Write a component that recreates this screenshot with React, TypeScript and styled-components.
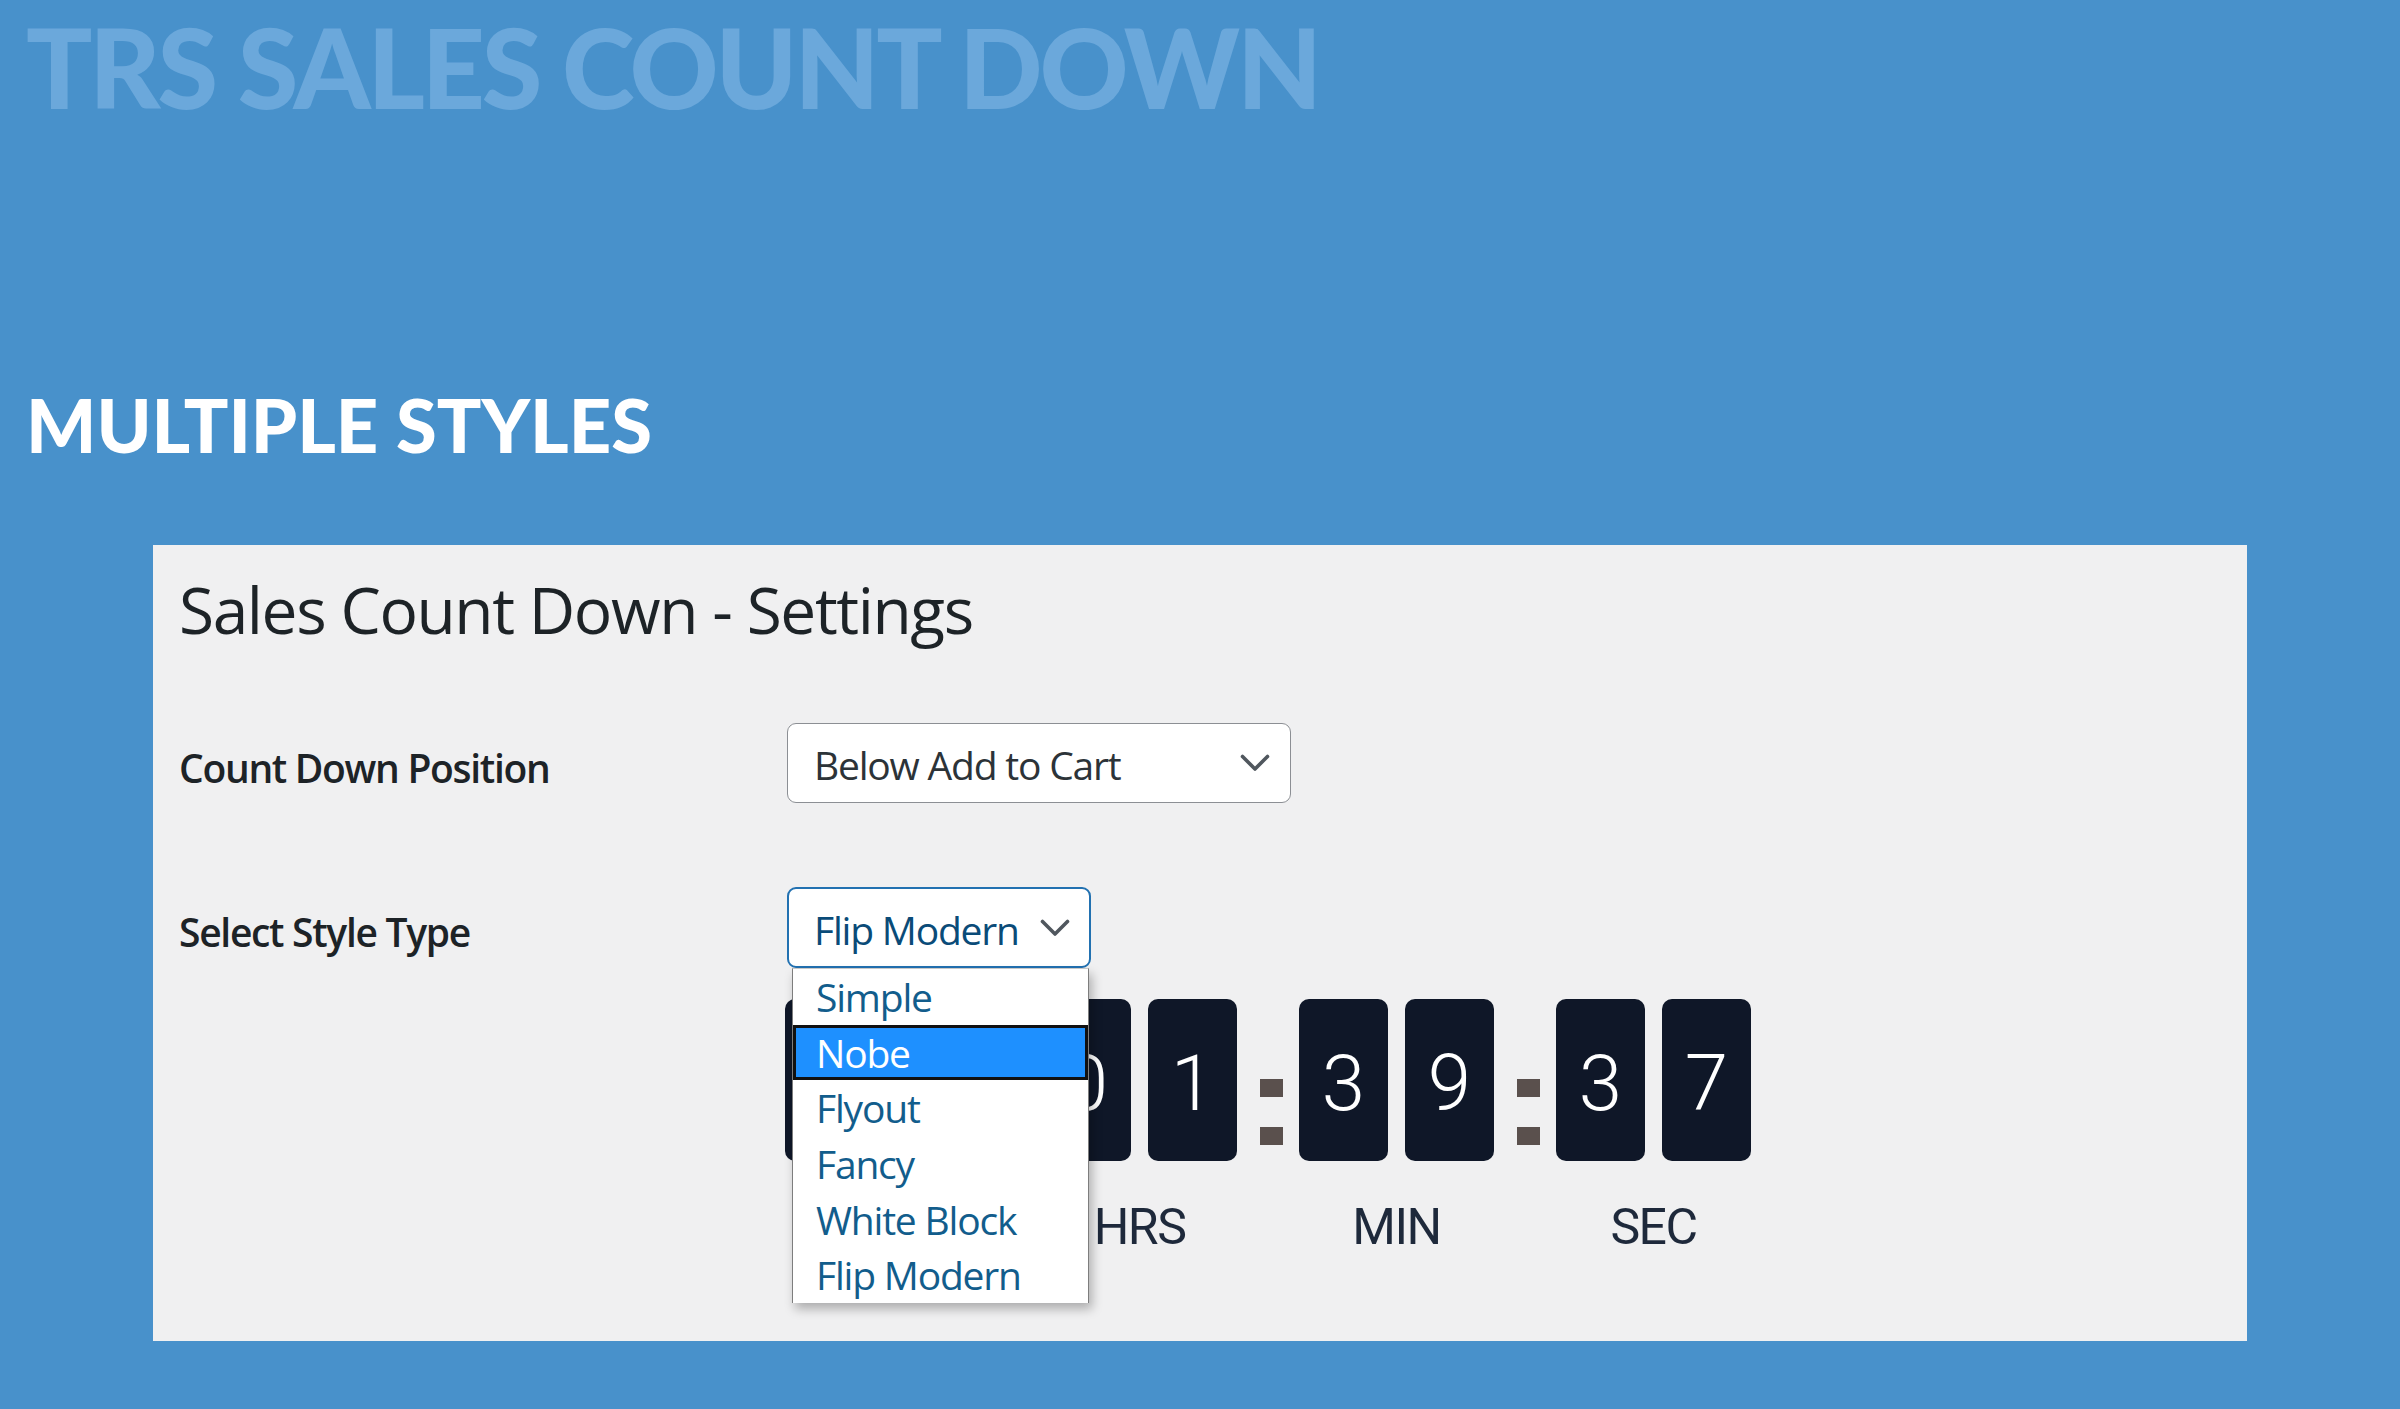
import React from "react";
import styled, { createGlobalStyle } from "styled-components";

const GlobalStyle = createGlobalStyle`
  html, body {
    margin: 0;
    padding: 0;
    background: #4891cb;
  }
  * {
    box-sizing: border-box;
  }
`;

const styleOptions = ["Simple", "Nobe", "Flyout", "Fancy", "White Block", "Flip Modern"];

const countdown = [
  { label: "DAYS", digits: ["0", "0"] },
  { label: "HRS", digits: ["0", "1"] },
  { label: "MIN", digits: ["3", "9"] },
  { label: "SEC", digits: ["3", "7"] },
];

const Chevron = () => (
  <svg width="30" height="18" viewBox="0 0 30 18" fill="none">
    <polyline
      points="2.5,2.5 15,15 27.5,2.5"
      stroke="#50575e"
      strokeWidth="3.6"
      strokeLinecap="round"
      strokeLinejoin="round"
    />
  </svg>
);

export default function App() {
  return (
    <>
      <GlobalStyle />
      <Page>
        <BigTitle>TRS SALES COUNT DOWN</BigTitle>
        <SubTitle>MULTIPLE STYLES</SubTitle>
        <Panel>
          <PanelTitle>Sales Count Down - Settings</PanelTitle>
          <Form>
            <FormRow $spacing={75}>
              <FieldLabel>Count Down Position</FieldLabel>
              <SelectBox $width={504}>
                <SelectText>Below Add to Cart</SelectText>
                <Chevron />
              </SelectBox>
            </FormRow>
            <FormRow $spacing={84}>
              <FieldLabel>Select Style Type</FieldLabel>
              <SelectBox $width={304} $focused>
                <SelectText $focused>Flip Modern</SelectText>
                <Chevron />
                <OptionList>
                  {styleOptions.map((opt) => (
                    <OptionItem key={opt} $active={opt === "Nobe"}>
                      {opt}
                    </OptionItem>
                  ))}
                </OptionList>
              </SelectBox>
            </FormRow>
            <FormRow $spacing={31}>
              <div />
              <Countdown>
                {countdown.map((group, i) => (
                  <React.Fragment key={group.label}>
                    {i > 0 && (
                      <Colon>
                        <ColonDot />
                        <ColonDot />
                      </Colon>
                    )}
                    <TimeGroup>
                      <DigitRow>
                        {group.digits.map((d, j) => (
                          <DigitCard key={j}>{d}</DigitCard>
                        ))}
                      </DigitRow>
                      <TimeLabel>{group.label}</TimeLabel>
                    </TimeGroup>
                  </React.Fragment>
                ))}
              </Countdown>
            </FormRow>
          </Form>
        </Panel>
      </Page>
    </>
  );
}

const Page = styled.div`
  width: 2400px;
  height: 1409px;
  overflow: hidden;
  background: #4891cb;
  padding: 11px 0 0 26px;
  display: flex;
  flex-direction: column;
  align-items: flex-start;
`;

const BigTitle = styled.h1`
  margin: 0;
  font-family: Lato, "Open Sans", sans-serif;
  font-weight: 900;
  font-size: 110px;
  line-height: 110px;
  letter-spacing: -3.2px;
  color: #6ba8db;
  white-space: nowrap;
`;

const SubTitle = styled.h2`
  margin: 267px 0 0 0;
  font-family: Lato, "Open Sans", sans-serif;
  font-weight: 900;
  font-size: 74px;
  line-height: 74px;
  color: #ffffff;
  white-space: nowrap;
`;

const Panel = styled.section`
  margin: 83px 0 0 127px;
  width: 2094px;
  height: 796px;
  background: #f0f0f1;
  padding: 27px 26px;
  font-family: "Open Sans", "Noto Sans", sans-serif;
  color: #1d2327;
`;

const PanelTitle = styled.h1`
  margin: 0;
  font-weight: 400;
  font-size: 64px;
  line-height: 76px;
  letter-spacing: -1.4px;
  color: #1d2327;
`;

const Form = styled.div`
  display: flex;
  flex-direction: column;
`;

const FormRow = styled.div<{ $spacing: number }>`
  display: grid;
  grid-template-columns: 608px 1fr;
  align-items: start;
  margin-top: ${(p) => p.$spacing}px;
`;

const FieldLabel = styled.div`
  font-weight: 600;
  font-size: 39px;
  line-height: 71px;
  letter-spacing: -1.3px;
  padding-top: 9px;
  color: #1d2327;
`;

const SelectBox = styled.div<{ $width: number; $focused?: boolean }>`
  position: relative;
  width: ${(p) => p.$width}px;
  height: ${(p) => (p.$focused ? 81 : 80)}px;
  background: #ffffff;
  border: ${(p) => (p.$focused ? "2px solid #2271b1" : "1px solid #8c8f94")};
  border-radius: 9px;
  display: flex;
  align-items: center;
  justify-content: space-between;
  padding: 0 ${(p) => (p.$focused ? 19 : 20)}px 0
    ${(p) => (p.$focused ? 25 : 26)}px;
`;

const SelectText = styled.span<{ $focused?: boolean }>`
  font-size: 39px;
  line-height: 78px;
  padding-top: 4px;
  letter-spacing: -1.2px;
  color: ${(p) => (p.$focused ? "#0a4b78" : "#2c3338")};
  white-space: nowrap;
`;

const OptionList = styled.ul`
  position: absolute;
  z-index: 5;
  top: calc(100% + 2px);
  left: 3px;
  width: 297px;
  margin: 0;
  padding: 0;
  list-style: none;
  background: #ffffff;
  border: 1px solid #7d7d7d;
  border-top-color: #c8c8c8;
  border-bottom: none;
  box-shadow: 3px 6px 10px rgba(0, 0, 0, 0.28);
`;

const OptionItem = styled.li<{ $active?: boolean }>`
  height: 55.6px;
  display: flex;
  align-items: center;
  padding-left: ${(p) => (p.$active ? 20 : 23)}px;
  font-size: 39px;
  letter-spacing: -1.2px;
  color: ${(p) => (p.$active ? "#ffffff" : "#125d8c")};
  background: ${(p) => (p.$active ? "#1e90ff" : "transparent")};
  border: ${(p) => (p.$active ? "3px solid #111111" : "none")};
  white-space: nowrap;
`;

const Countdown = styled.div`
  display: flex;
  align-items: flex-start;
  margin-left: -2px;
`;

const TimeGroup = styled.div`
  display: flex;
  flex-direction: column;
  align-items: center;
`;

const DigitRow = styled.div`
  display: flex;
  gap: 17px;
`;

const DigitCard = styled.div`
  width: 89px;
  height: 162px;
  border-radius: 10px;
  background: #0f1728;
  color: #ffffff;
  display: flex;
  align-items: center;
  justify-content: center;
  font-family: Roboto, "Open Sans", sans-serif;
  font-weight: 300;
  font-size: 78px;
  padding-top: 6px;
`;

const TimeLabel = styled.div`
  margin-top: 41px;
  font-family: Roboto, "Open Sans", sans-serif;
  font-weight: 400;
  font-size: 50px;
  line-height: 50px;
  letter-spacing: -1.5px;
  color: #1e293b;
`;

const Colon = styled.div`
  width: 62px;
  height: 162px;
  padding: 80px 16px 0 23px;
  display: flex;
  flex-direction: column;
  gap: 30px;
`;

const ColonDot = styled.span`
  display: block;
  width: 23px;
  height: 18px;
  background: #5a504d;
`;
